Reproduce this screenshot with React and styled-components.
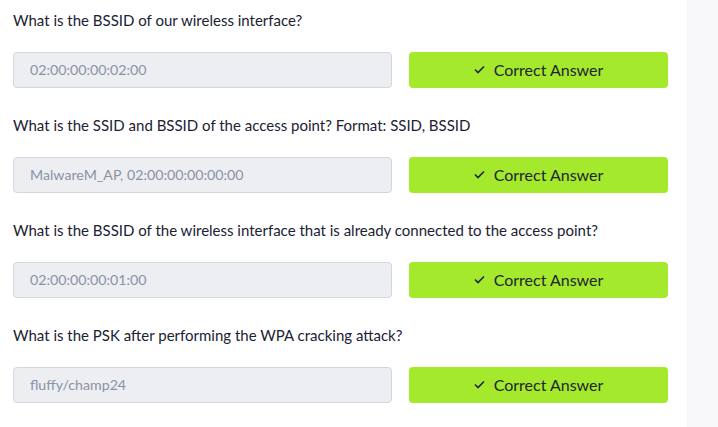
import styled, { createGlobalStyle } from "styled-components";

const GlobalStyle = createGlobalStyle`
  html, body {
    margin: 0;
    padding: 0;
    background: #ffffff;
  }
  body {
    font-family: Lato, "Open Sans", sans-serif;
  }
`;

const Page = styled.div`
  display: flex;
  height: 427px;
  overflow: hidden;
`;

const Main = styled.main`
  width: 687px;
  flex-shrink: 0;
  padding: 8px 19px 0 13px;
  box-sizing: border-box;
`;

const Aside = styled.aside`
  flex: 1;
  background: #f8f8fa;
`;

const Question = styled.div`
  margin-bottom: 25px;
`;

const Label = styled.p`
  margin: 0 0 20px;
  font-size: 15px;
  line-height: 24px;
  color: #1a2233;
`;

const Row = styled.div`
  display: grid;
  grid-template-columns: 379px 1fr;
  gap: 17px;
`;

const Field = styled.div`
  height: 36px;
  box-sizing: border-box;
  display: flex;
  align-items: center;
  padding: 0 16px 1px;
  background: #eceef2;
  border: 1px solid #d3d7de;
  border-radius: 4px;
  font-size: 14.2px;
  color: #8a93a4;
`;

const Button = styled.button`
  height: 36px;
  border: none;
  border-radius: 4px;
  background: #a4e92b;
  color: #1e2530;
  font-family: inherit;
  font-size: 16px;
  display: flex;
  align-items: center;
  justify-content: center;
  gap: 9px;
  padding: 0 0 2px;
  cursor: pointer;
`;

const Check = () => (
  <svg width="11" height="9" viewBox="0 0 11 9" fill="none">
    <path d="M1 4.5 L4 7.5 L10 1.5" stroke="#1e2530" strokeWidth="1.6" />
  </svg>
);

const items = [
  { q: "What is the BSSID of our wireless interface?", a: "02:00:00:00:02:00" },
  {
    q: "What is the SSID and BSSID of the access point? Format: SSID, BSSID",
    a: "MalwareM_AP, 02:00:00:00:00:00",
  },
  {
    q: "What is the BSSID of the wireless interface that is already connected to the access point?",
    a: "02:00:00:00:01:00",
  },
  { q: "What is the PSK after performing the WPA cracking attack?", a: "fluffy/champ24" },
];

export default function App() {
  return (
    <>
      <GlobalStyle />
      <Page>
        <Main>
          {items.map((item) => (
            <Question key={item.q}>
              <Label>{item.q}</Label>
              <Row>
                <Field>{item.a}</Field>
                <Button type="button">
                  <Check />
                  Correct Answer
                </Button>
              </Row>
            </Question>
          ))}
        </Main>
        <Aside />
      </Page>
    </>
  );
}
